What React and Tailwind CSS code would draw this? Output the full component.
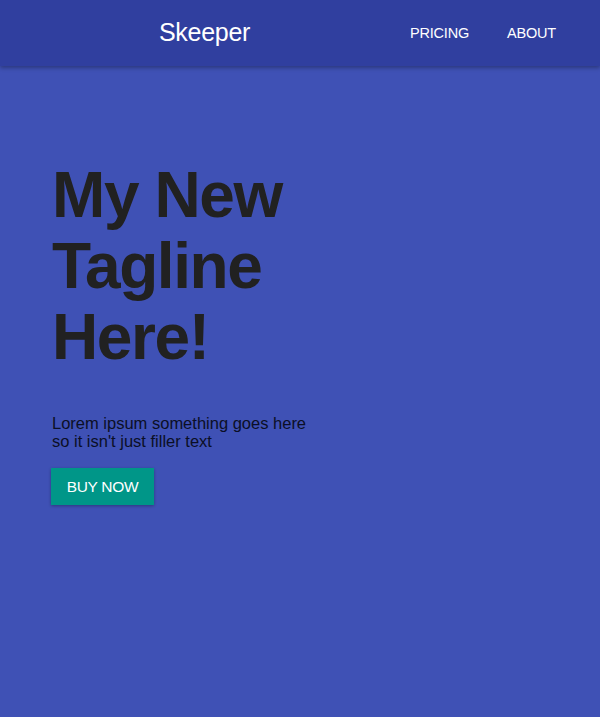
export default function App() {
  return (
    <div className="min-h-[717px] bg-[#3f51b5]" style={{ fontFamily: '"Liberation Sans", Arial, sans-serif' }}>
      <header className="h-[66px] bg-[#303f9f] shadow-[0_2px_4px_rgba(0,0,0,0.3)] flex items-center pl-[159px] pr-[44px] relative z-10">
        <div className="text-white text-[25px] leading-none tracking-[-0.3px] -mt-[2px]">Skeeper</div>
        <nav className="ml-auto flex gap-[38px] text-white text-[14.5px] leading-none tracking-[-0.2px]">
          <a>PRICING</a>
          <a>ABOUT</a>
        </nav>
      </header>
      <main className="pl-[52px] pt-[94px]">
        <h1 className="text-[64px] leading-[71px] font-bold text-[#212121] w-[300px] tracking-[-1.4px]">
          My New Tagline Here!
        </h1>
        <p className="mt-[41px] text-[16.5px] leading-[18px] text-[#0b0f26] w-[262px]">
          Lorem ipsum something goes here so it isn't just filler text
        </p>
        <button className="mt-[18px] -ml-[1px] w-[103px] h-[37px] bg-[#009688] text-white text-[15.5px] tracking-[-0.3px] shadow-[0_1px_3px_rgba(0,0,0,0.3)]">
          BUY NOW
        </button>
      </main>
    </div>
  );
}
